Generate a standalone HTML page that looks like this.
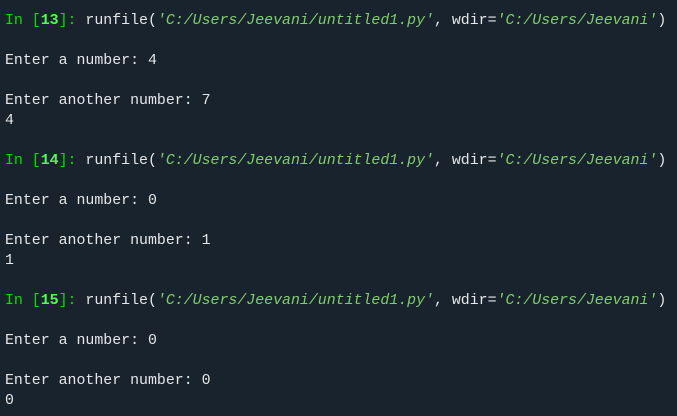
<!DOCTYPE html>
<html><head><meta charset="utf-8"><style>
html,body{margin:0;padding:0;background:#19232d;width:677px;height:416px;overflow:hidden}
pre{margin:0;padding:11px 0 0 5px;font-family:"Liberation Mono",monospace;font-size:14.9px;line-height:20px;color:#e6e6e6}
.g{color:#00e000}.b{color:#4cff4c;font-weight:bold}.s{color:#7fcf6a;font-style:italic}
</style></head><body><pre><span class="g">In [</span><span class="b">13</span><span class="g">]:</span> runfile(<span class="s">'C:/Users/Jeevani/untitled1.py'</span>, wdir=<span class="s">'C:/Users/Jeevani'</span>)

Enter a number: 4

Enter another number: 7
4

<span class="g">In [</span><span class="b">14</span><span class="g">]:</span> runfile(<span class="s">'C:/Users/Jeevani/untitled1.py'</span>, wdir=<span class="s">'C:/Users/Jeevani'</span>)

Enter a number: 0

Enter another number: 1
1

<span class="g">In [</span><span class="b">15</span><span class="g">]:</span> runfile(<span class="s">'C:/Users/Jeevani/untitled1.py'</span>, wdir=<span class="s">'C:/Users/Jeevani'</span>)

Enter a number: 0

Enter another number: 0
0</pre></body></html>
